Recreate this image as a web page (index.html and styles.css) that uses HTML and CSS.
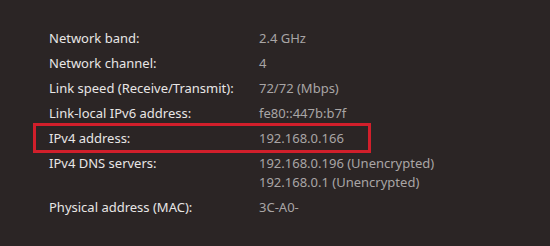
FILE: index.html
```html
<!DOCTYPE html>
<html lang="en">
<head>
<meta charset="utf-8">
<link rel="stylesheet" href="styles.css">
</head>
<body>
<div class="props">
  <div class="row"><div class="label">Network band:</div><div class="value">2.4 GHz</div></div>
  <div class="row"><div class="label">Network channel:</div><div class="value">4</div></div>
  <div class="row"><div class="label">Link speed (Receive/Transmit):</div><div class="value">72/72 (Mbps)</div></div>
  <div class="row"><div class="label">Link-local IPv6 address:</div><div class="value">fe80::447b:b7f</div></div>
  <div class="row highlighted"><div class="label">IPv4 address:</div><div class="value">192.168.0.166</div></div>
  <div class="row"><div class="label">IPv4 DNS servers:</div><div class="value">192.168.0.196 (Unencrypted)<br>192.168.0.1 (Unencrypted)</div></div>
  <div class="row"><div class="label">Physical address (MAC):</div><div class="value">3C-A0-</div></div>
</div>
</body>
</html>
```
FILE: styles.css
```css
html, body {
  margin: 0;
  padding: 0;
  background: #2b2525;
  height: 100%;
}
body {
  font-family: "Noto Sans", "Open Sans", sans-serif;
  font-size: 13px;
  line-height: 19px;
}
.props {
  padding: 26px 0 0 49px;
  display: flex;
  flex-direction: column;
}
.row {
  position: relative;
  display: grid;
  grid-template-columns: 210px auto;
  padding: 3px 0;
}
.label {
  color: #e8e6e6;
}
.value {
  color: #a9a5a5;
}
.highlighted::after {
  content: "";
  position: absolute;
  left: -16px;
  top: -3px;
  width: 338px;
  height: 30px;
  box-sizing: border-box;
  border: 3px solid #d11f2b;
}
```
